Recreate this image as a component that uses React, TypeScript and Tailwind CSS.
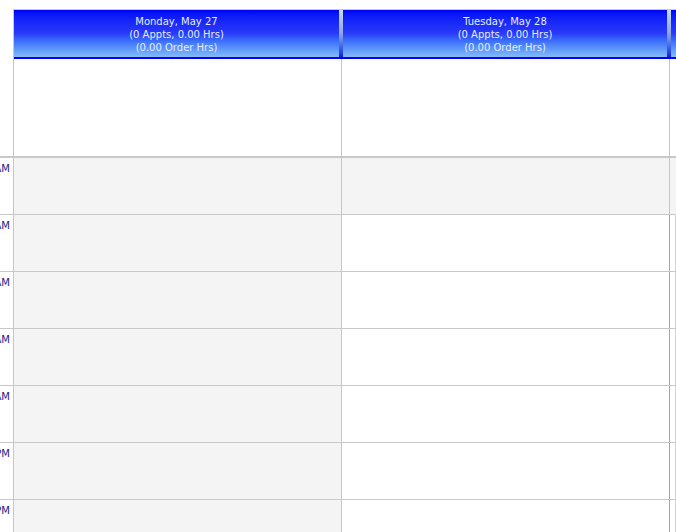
const days = [
  { label: 'Monday, May 27', width: 'w-[325px]' },
  { label: 'Tuesday, May 28', width: 'w-[324px]' },
];

const hours = ['7:00 AM', '8:00 AM', '9:00 AM', '10:00 AM', '11:00 AM', '12:00 PM', '1:00 PM'];

function HeaderCell({ label, width }: { label: string; width: string }) {
  return (
    <div
      className={`${width} shrink-0 h-[47px] pt-[5px] bg-gradient-to-b from-[#0000f6] via-[#2a3af8] to-[#84bcf8] text-center text-[10px] leading-[13px] text-[#e6eeff]`}
    >
      <div>{label}</div>
      <div>(0 Appts, 0.00 Hrs)</div>
      <div>(0.00 Order Hrs)</div>
    </div>
  );
}

function Separator() {
  return <div className="w-[4px] shrink-0 h-[47px] bg-gradient-to-b from-[#c4dcea] via-[#8ea2e8] to-[#1616e6]" />;
}

export default function App() {
  return (
    <div className="w-[676px] h-[532px] overflow-hidden bg-white font-['DejaVu_Sans',sans-serif]">
      {/* Header */}
      <div className="h-[9px]" />
      <div className="ml-[13px] bg-[#b4d0de] pt-[1px] pl-[1px]">
        <div className="flex overflow-hidden">
          <HeaderCell {...days[0]} />
          <Separator />
          <HeaderCell {...days[1]} />
          <Separator />
          <div className="w-[40px] shrink-0 h-[47px] bg-gradient-to-b from-[#0000f6] via-[#2a3af8] to-[#84bcf8]" />
        </div>
        <div className="h-[2px] bg-[#0000f4]" />
      </div>

      {/* All-day area */}
      <div className="flex h-[97px]">
        <div className="w-[14px] shrink-0 border-r border-[#c6c6c6]" />
        <div className="w-[328px] shrink-0 border-r border-[#c6c6c6]" />
        <div className="w-[328px] shrink-0 border-r border-[#c6c6c6]" />
        <div className="flex-1" />
      </div>
      <div className="h-[2px] bg-[#c8c8c8]" />

      {/* Hour rows */}
      {hours.map((h, i) => (
        <div key={h} className="flex h-[57px] border-b border-[#c8c8c8]">
          <div className="w-[14px] shrink-0 overflow-hidden border-r border-[#c6c6c6] flex justify-end">
            <span className="pr-[3px] pt-[4px] whitespace-nowrap text-[10px] leading-[13px] text-[#20208a]">{h}</span>
          </div>
          <div className="w-[328px] shrink-0 bg-[#f4f4f4] border-r border-[#c6c6c6]" />
          <div className={`w-[328px] shrink-0 border-r ${i === 0 ? 'bg-[#f4f4f4] border-[#c6c6c6]' : 'bg-white border-[#a4a4a4]'}`} />
          <div className={`flex-1 ${i === 0 ? 'bg-[#f4f4f4]' : 'bg-white'}`}>
            {i > 0 && <div className="ml-[5px] h-full border-l border-[#d4d4d4]" />}
          </div>
        </div>
      ))}
    </div>
  );
}
